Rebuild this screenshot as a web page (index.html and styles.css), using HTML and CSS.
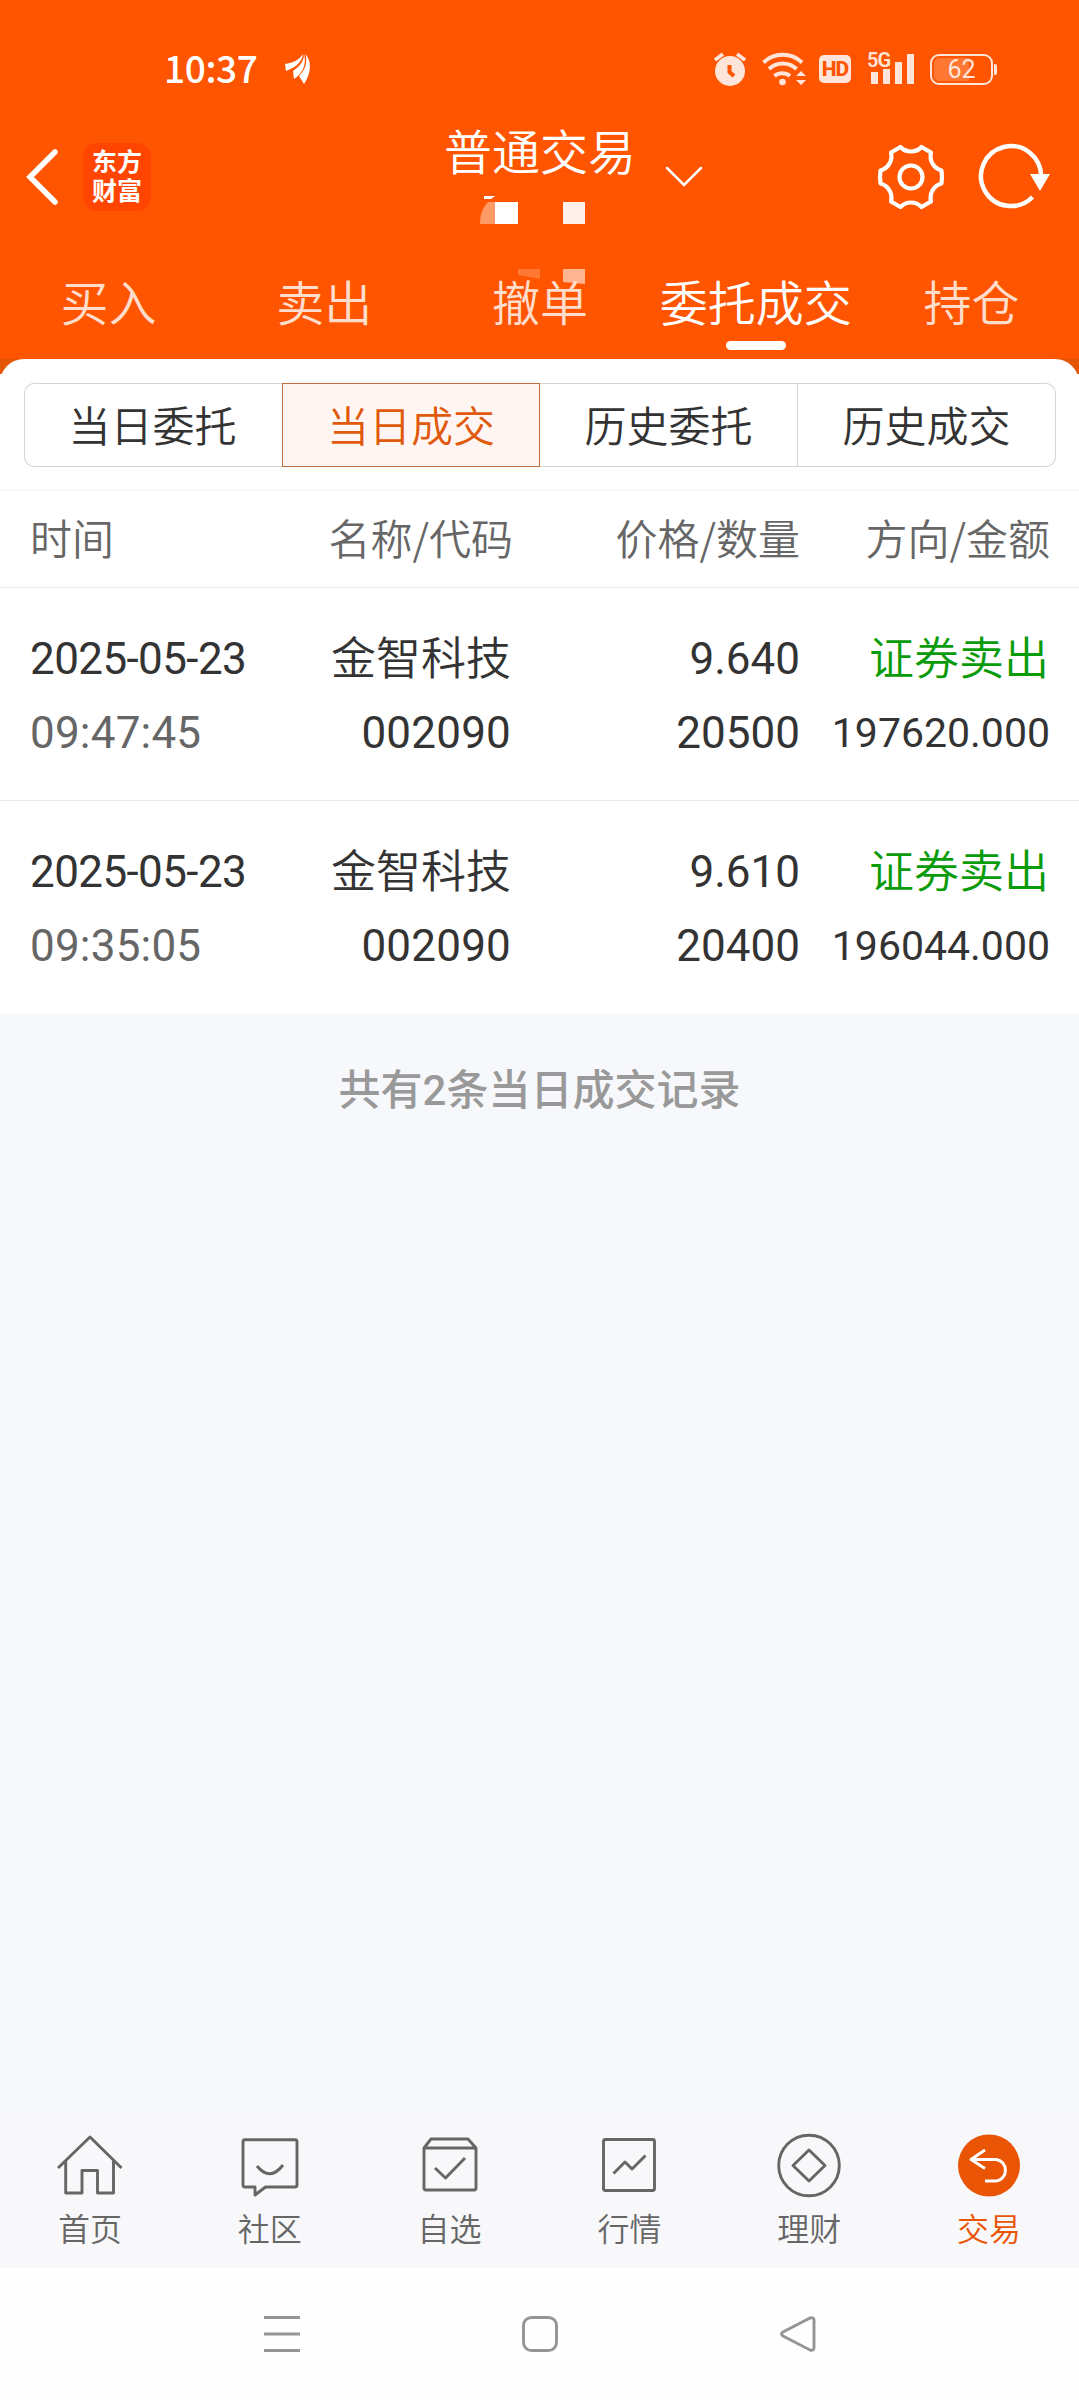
FILE: index.html
```html
<!DOCTYPE html>
<html lang="zh-CN">
<head>
    <meta charset="UTF-8">
    <meta name="viewport" content="width=device-width, initial-scale=1.0">
    <title>普通交易</title>
    <link rel="stylesheet" href="styles.css">
</head>
<body>
    <header class="header">
        <div class="status-bar">
            <span class="clock">10:37</span>
            <svg class="wing" width="28" height="32" viewBox="0 0 28 32" fill="#fff">
                <path d="M1 11C8 10 14 8 19 1C18 10 10 15 2 18Z"/>
                <path d="M20 1C20 10 14 14 9 18L10 26C18 21 23 12 20 1Z"/>
                <path d="M21.500 1C24 12 20 18 15 23L20 31C26 22 29 10 21.500 1Z"/>
            </svg>
            <div class="status-icons">
                <svg width="32" height="36" viewBox="0 0 32 36">
                    <circle cx="16" cy="20" r="15" fill="#ffe5d9"/>
                    <path d="M1 9L9 3M31 9L23 3" stroke="#ffe5d9" stroke-width="3.500"/>
                    <path d="M15.500 14V21L20 25" stroke="#ff5500" stroke-width="4" fill="none"/>
                </svg>
                <svg class="wifi" width="44" height="36" viewBox="0 0 44 36">
                    <path d="M1.500 11.500A28 28 0 0 1 40 11.500M7 18A20 20 0 0 1 34.500 18M12.500 25A12 12 0 0 1 28 25" fill="none" stroke="#ffe5d9" stroke-width="4"/>
                    <circle cx="20.500" cy="31" r="3.300" fill="#ffe5d9"/>
                    <path d="M34 25L39 20L44 25ZM34 29L39 34L44 29Z" fill="#ffe5d9"/>
                </svg>
                <span class="hd">HD</span>
                <div class="signal">
                    <span class="signal-type">5G</span>
                    <svg width="46" height="36" viewBox="0 0 46 36" fill="#ffe5d9">
                        <path d="M3 21h7v12H3zM15 18h7v15h-7zM27 11h7v22h-7zM39 3h7v30h-7z"/>
                    </svg>
                </div>
                <div class="battery"><span class="battery-box">62</span><i class="battery-tip"></i></div>
            </div>
        </div>

        <div class="title-bar">
            <svg class="back" width="34" height="58" viewBox="0 0 34 58">
                <path d="M30 4L5 29L30 54" fill="none" stroke="#fff" stroke-width="5.500" stroke-linecap="round"/>
            </svg>
            <div class="logo">东方<br>财富</div>
            <h1 class="title">普通交易</h1>
            <svg class="arrow-down" width="38" height="22" viewBox="0 0 38 22">
                <path d="M2 2L19 19L36 2" fill="none" stroke="#fff" stroke-width="2.500" stroke-linecap="round"/>
            </svg>
            <svg class="gear" width="68" height="68" viewBox="0 0 68 68" fill="none" stroke="#fff" stroke-width="4.200" stroke-linejoin="round">
                <path d="M23.500 4C29 10 39 10 44.500 4L54 9.500C52 18 57 25.500 64.500 27.500Q65.500 34 64.500 40.500C57 42.500 52 50 54 58.500L44.500 64C39 58 29 58 23.500 64L14 58.500C16 50 11 42.500 3.500 40.500Q2.500 34 3.500 27.500C11 25.500 16 18 14 9.500Z"/>
                <circle cx="34" cy="34" r="11.500"/>
            </svg>
            <svg class="refresh" width="74" height="68" viewBox="0 0 74 68">
                <path d="M64 34A30 30 0 1 0 55.500 54" fill="none" stroke="#fff" stroke-width="4.500"/>
                <path d="M53 31H73L63 48Z" fill="#fff"/>
            </svg>
            <svg class="mosaic" width="110" height="94" viewBox="0 0 110 94">
                <path d="M4 1H15L11 4H4Z" fill="#fff"/>
                <path d="M15 7V29H0C0 19 3 12 8 7Z" fill="#ff9966"/>
                <path d="M15 7H38V29H15Z" fill="#fff"/>
                <path d="M83 7H105V29H83Z" fill="#fff1e9"/>
                <path d="M38 74H60V84L38 80Z" fill="#ff7733"/>
                <path d="M83 74H105V89L83 87Z" fill="#ffb592"/>
            </svg>
        </div>

        <nav class="tabs">
            <a class="tab">买入</a>
            <a class="tab">卖出</a>
            <a class="tab">撤单</a>
            <a class="tab active">委托成交</a>
            <a class="tab">持仓</a>
        </nav>
    </header>

    <div class="panel-wrap">
        <main class="panel">
            <div class="segments">
                <button class="segment">当日委托</button>
                <button class="segment active">当日成交</button>
                <button class="segment">历史委托</button>
                <button class="segment">历史成交</button>
            </div>

            <div class="row head">
                <span>时间</span>
                <span>名称/代码</span>
                <span>价格/数量</span>
                <span>方向/金额</span>
            </div>

            <div class="row deal">
                <div><p class="date">2025-05-23</p><p class="time">09:47:45</p></div>
                <div><p class="name">金智科技</p><p class="code">002090</p></div>
                <div><p>9.640</p><p>20500</p></div>
                <div><p class="name sell">证券卖出</p><p class="amount">197620.000</p></div>
            </div>

            <div class="row deal">
                <div><p class="date">2025-05-23</p><p class="time">09:35:05</p></div>
                <div><p class="name">金智科技</p><p class="code">002090</p></div>
                <div><p>9.610</p><p>20400</p></div>
                <div><p class="name sell">证券卖出</p><p class="amount">196044.000</p></div>
            </div>
        </main>
    </div>

    <p class="summary">共有2条当日成交记录</p>

    <footer class="bottom-nav">
        <a class="nav-item">
            <svg width="68" height="68" viewBox="0 0 68 68">
                <path d="M2 36L34 5L65.500 36M9.700 29V61H26V38.500H41.500V61H57.500V29"/>
            </svg>
            首页
        </a>
        <a class="nav-item">
            <svg width="68" height="68" viewBox="0 0 68 68">
                <path d="M9 7.700H59Q61 7.700 61 9.700V53Q61 55 59 55H29.500L19 63V55H9Q7 55 7 53V9.700Q7 7.700 9 7.700ZM21 34Q34 50 47 33"/>
            </svg>
            社区
        </a>
        <a class="nav-item">
            <svg width="68" height="68" viewBox="0 0 68 68">
                <path d="M8 16L15 7H52L60 16V56Q60 58 58 58H10Q8 58 8 56ZM8 16H60M19 36L29.500 46L49 26"/>
            </svg>
            自选
        </a>
        <a class="nav-item">
            <svg width="68" height="68" viewBox="0 0 68 68">
                <rect x="8.500" y="7.500" width="51" height="51" rx="2"/>
                <path d="M18.500 41.500L30 30L37 37L50.500 23.500"/>
            </svg>
            行情
        </a>
        <a class="nav-item">
            <svg width="68" height="68" viewBox="0 0 68 68">
                <circle cx="34" cy="33.500" r="30.300"/>
                <path d="M34 18L50 33.500L34 49L18 33.500Z"/>
            </svg>
            理财
        </a>
        <a class="nav-item active">
            <svg width="68" height="68" viewBox="0 0 68 68">
                <circle class="disc" cx="34" cy="33.500" r="31"/>
                <path d="M30 18L16 27.500L30 36.500M16 27.500H41A10.500 10.800 0 0 1 41 49H30"/>
            </svg>
            交易
        </a>
    </footer>

    <div class="system-bar">
        <svg width="38" height="38" viewBox="0 0 38 38"><path d="M1 2.500H37M1 19H37M1 35.500H37"/></svg>
        <svg width="38" height="38" viewBox="0 0 38 38"><rect x="2.500" y="2.500" width="33" height="33" rx="8"/></svg>
        <svg width="38" height="38" viewBox="0 0 38 38"><path d="M31 3L4 17Q1 19 4 21L31 35Q35 36 35 33V5Q35 2 31 3Z"/></svg>
    </div>
</body>
</html>
```

FILE: styles.css
```css
* {
    margin: 0;
    padding: 0;
    box-sizing: border-box;
}

body {
    width: 1079px;
    height: 2400px;
    display: flex;
    flex-direction: column;
    font-family: Roboto, "Noto Sans CJK SC", sans-serif;
    background-color: #f7f8fb;
    color: #333;
    overflow: hidden;
}

svg {
    display: block;
    flex-shrink: 0;
}

.header {
    height: 359px;
    background-color: #ff5500;
    color: #fff;
}

.status-bar {
    height: 122px;
    padding: 16px 82px 0 164px;
    display: flex;
    align-items: center;
}

.clock {
    width: 120px;
    font-family: "Noto Sans CJK SC", sans-serif;
    font-size: 37px;
    font-weight: 500;
    line-height: 60px;
    letter-spacing: -0.4px;
    margin-top: -4px;
}

.status-icons {
    display: flex;
    align-items: center;
    margin-left: auto;
    color: #ffe5d9;
}

.wifi {
    margin-left: 16px;
}

.hd {
    width: 32px;
    height: 28px;
    margin-left: 13px;
    border-radius: 5px;
    background-color: #ffe5d9;
    color: #ff5500;
    font-size: 21px;
    font-weight: 800;
    line-height: 29px;
    text-align: center;
    letter-spacing: -1px;
}

.signal {
    position: relative;
    margin-left: 17px;
}

.signal-type {
    position: absolute;
    left: -1px;
    top: 0;
    font-size: 20px;
    font-weight: 600;
    line-height: 18px;
    letter-spacing: -1px;
}

.battery {
    display: flex;
    align-items: center;
    margin-left: 16px;
}

.battery-box {
    width: 63px;
    height: 31px;
    border: 2px solid #ffe5d9;
    border-radius: 9px;
    background: linear-gradient(90deg, #ff7733 62%, #ff5500 62%);
    background-clip: content-box;
    padding: 2px;
    font-size: 25px;
    line-height: 24px;
    text-align: center;
}

.battery-tip {
    width: 3px;
    height: 11px;
    margin-left: 1px;
    border-radius: 0 2px 2px 0;
    background-color: #ffe5d9;
}

.title-bar {
    position: relative;
    height: 110px;
    padding: 0 28px 0 25px;
    display: flex;
    align-items: center;
}

.logo {
    width: 68px;
    height: 68px;
    margin-left: 24px;
    padding-top: 5px;
    border-radius: 14px;
    background-color: #ff4500;
    font-size: 25px;
    font-weight: 700;
    line-height: 29px;
    text-align: center;
}

.title {
    margin-left: 293px;
    margin-top: -46px;
    font-size: 48px;
    font-weight: 350;
    line-height: 60px;
}

.arrow-down {
    margin-left: 29px;
}

.gear {
    margin-left: auto;
}

.refresh {
    margin-left: 32px;
}

/* blocks covering the account number */
.mosaic {
    position: absolute;
    left: 480px;
    top: 73px;
}

.tabs {
    height: 127px;
    display: flex;
}

.tab {
    position: relative;
    flex: 1;
    padding-top: 43px;
    padding-left: 1px;
    font-size: 48px;
    font-weight: 350;
    line-height: 60px;
    text-align: center;
    white-space: nowrap;
    color: #ffddcc;
}

.tab.active {
    color: #fff;
}

.tab.active::after {
    content: "";
    position: absolute;
    left: 50%;
    bottom: 9px;
    width: 60px;
    height: 9px;
    margin-left: -29px;
    border-radius: 5px;
    background-color: #fff;
}

.panel-wrap {
    background: linear-gradient(#e35608 15px, #fff 15px);
}

.panel {
    border-radius: 24px 24px 0 0;
    background-color: #fff;
}

.segments {
    height: 132px;
    padding: 24px 23px 23px 24px;
    display: grid;
    grid-template-columns: repeat(4, 1fr);
    border-bottom: 1px solid #f4f4f4;
}

.segment {
    border: 1px solid #d4d4d4;
    border-left-width: 0;
    background-color: #fff;
    font-family: inherit;
    font-size: 42px;
    font-weight: 350;
    line-height: 60px;
    padding-top: 5px;
    color: #333;
}

.segment:first-child {
    border-left-width: 1px;
    border-radius: 10px 0 0 10px;
    border-right-width: 0;
    padding-right: 2px;
}

.segment:last-child {
    border-radius: 0 10px 10px 0;
}

.segment.active {
    border: 1px solid #c0703c;
    background-color: #fff6f3;
    color: #e0590c;
}

.row {
    display: grid;
    grid-template-columns: 241px 241px 288px 250px;
    padding-left: 30px;
    border-bottom: 1px solid #ebebeb;
    text-align: right;
    white-space: nowrap;
}

.row > :first-child {
    text-align: left;
}

.head {
    height: 97px;
    grid-template-columns: 241px 242px 287px 250px;
    align-items: center;
    padding-bottom: 4px;
    font-family: "Noto Sans CJK SC", sans-serif;
    font-size: 42px;
    font-weight: 350;
    line-height: 60px;
    color: #666;
}

.deal {
    height: 213px;
    padding-top: 34px;
    font-size: 44px;
    line-height: 74px;
}

.deal:last-child {
    border-bottom: none;
}

.date {
    letter-spacing: -0.6px;
}

.time {
    color: #666;
    letter-spacing: 0.2px;
}

.name {
    padding: 2px 1px 0 0;
    font-size: 45px;
    font-weight: 350;
    line-height: 72px;
}

.code {
    padding-right: 1px;
    letter-spacing: 0.2px;
}

.sell {
    color: #0a9b0a;
}

.amount {
    font-size: 41px;
}

.summary {
    margin-top: 47px;
    font-size: 42px;
    font-weight: 500;
    line-height: 60px;
    text-align: center;
    color: #999;
}

.bottom-nav {
    height: 152px;
    margin-top: auto;
    padding-top: 16px;
    display: flex;
    background-color: #f8f8fb;
}

.nav-item {
    flex: 1;
    display: flex;
    flex-direction: column;
    align-items: center;
    font-size: 32px;
    font-weight: 350;
    line-height: 60px;
    color: #666;
}

.nav-item svg {
    fill: none;
    stroke: #666;
    stroke-width: 2.9;
    stroke-linejoin: round;
}

.nav-item.active {
    color: #e95504;
}

.nav-item.active svg {
    stroke: #fff;
    stroke-width: 3;
}

.nav-item .disc {
    fill: #e95504;
    stroke: none;
}

.system-bar {
    height: 132px;
    padding: 0 262px 0 263px;
    display: flex;
    align-items: center;
    justify-content: space-between;
    background-color: #fefefe;
}

.system-bar svg {
    fill: none;
    stroke: #949494;
    stroke-width: 2.9;
}
```
